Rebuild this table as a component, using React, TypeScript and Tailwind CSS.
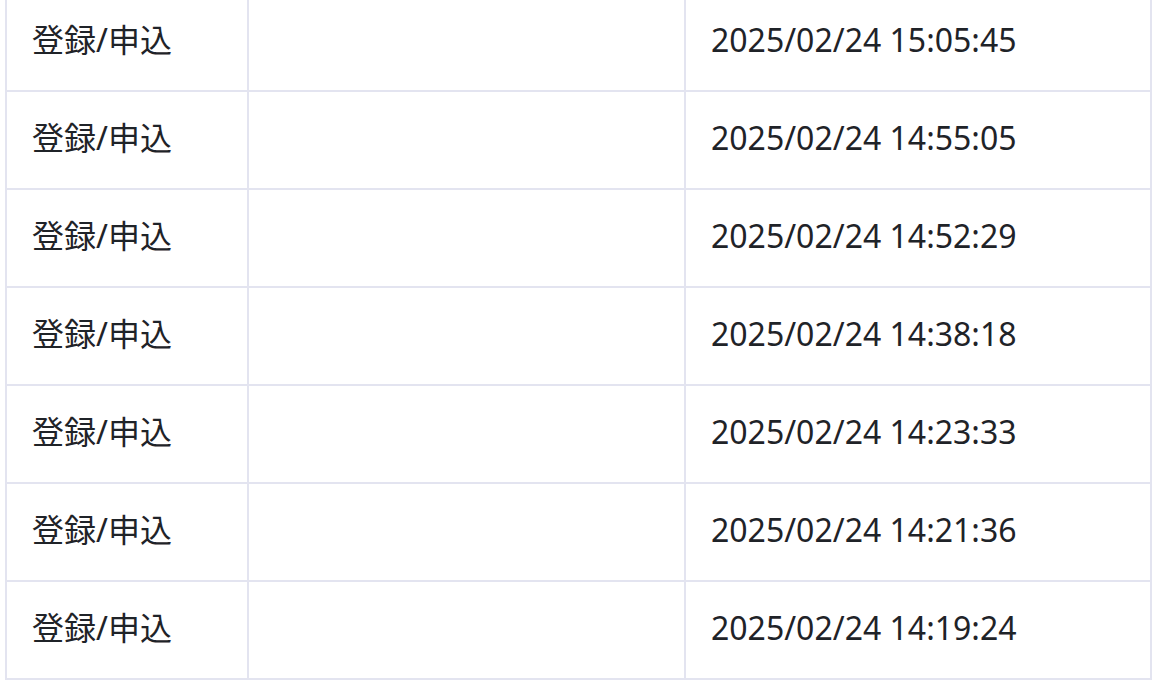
const ROWS = [
  "2025/02/24 15:05:45",
  "2025/02/24 14:55:05",
  "2025/02/24 14:52:29",
  "2025/02/24 14:38:18",
  "2025/02/24 14:23:33",
  "2025/02/24 14:21:36",
  "2025/02/24 14:19:24",
];

export default function App() {
  return (
    <div className="h-[682px] overflow-hidden bg-white">
      <div className="-mt-[8px] ml-[5px] mr-[2px] border-t-2 border-[#e3e4f0] font-['Noto_Sans','Noto_Sans_CJK_JP',sans-serif] text-[32px] text-[#1f2328]">
        {ROWS.map((time) => (
          <div key={time} className="flex h-[98px] border-x-2 border-b-2 border-[#e3e4f0]">
            <div className="flex w-[242px] shrink-0 items-center border-r-2 border-[#e3e4f0] pb-[4px] pl-[25px]">
              登録/申込
            </div>
            <div className="w-[437px] shrink-0 border-r-2 border-[#e3e4f0]" />
            <div className="flex flex-1 items-center pb-[4px] pl-[25px]">{time}</div>
          </div>
        ))}
      </div>
    </div>
  );
}
